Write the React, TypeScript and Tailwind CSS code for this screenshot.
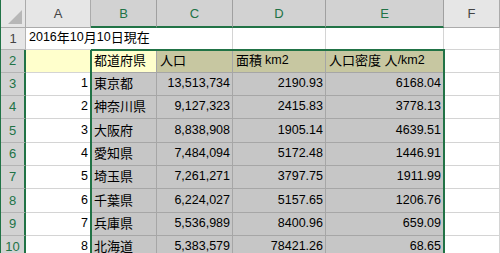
import React from 'react'

const rows = [
  { n: 1, pref: '東京都', pop: '13,513,734', area: '2190.93', dens: '6168.04' },
  { n: 2, pref: '神奈川県', pop: '9,127,323', area: '2415.83', dens: '3778.13' },
  { n: 3, pref: '大阪府', pop: '8,838,908', area: '1905.14', dens: '4639.51' },
  { n: 4, pref: '愛知県', pop: '7,484,094', area: '5172.48', dens: '1446.91' },
  { n: 5, pref: '埼玉県', pop: '7,261,271', area: '3797.75', dens: '1911.99' },
  { n: 6, pref: '千葉県', pop: '6,224,027', area: '5157.65', dens: '1206.76' },
  { n: 7, pref: '兵庫県', pop: '5,536,989', area: '8400.96', dens: '659.09' },
  { n: 8, pref: '北海道', pop: '5,383,579', area: '78421.26', dens: '68.65' },
]

const cols = ['A', 'B', 'C', 'D', 'E', 'F']

// row header cell (numbers on the left)
function RowHead({ n, sel }: { n: number; sel: boolean }) {
  return (
    <div
      className={
        sel
          ? 'flex items-center justify-center border-b border-r-2 border-b-[#b4b4b4] border-r-[#217346] bg-[#d2d2d2] text-[13px] text-[#217346]'
          : 'flex items-center justify-center border-b border-r border-[#b4b4b4] bg-[#e6e6e6] text-[13px] text-[#444]'
      }
    >
      {n}
    </div>
  )
}

function Cell({
  children,
  className = '',
}: {
  children?: React.ReactNode
  className?: string
}) {
  return <div className={`flex items-end pb-[2px] whitespace-nowrap ${className}`}>{children}</div>
}

export default function App() {
  const gray = 'border-b border-r border-[#a6a6a6] bg-[#c6c6c6]'
  const num = 'justify-end pr-[2px] text-[12.5px]'
  return (
    <div
      className="relative h-[253px] w-[500px] overflow-hidden border-l border-[#217346] bg-white text-black"
      style={{ fontFamily: '"Liberation Sans", "Noto Sans CJK JP", sans-serif' }}
    >
      <div className="grid grid-cols-[25px_65px_66px_76px_93px_118px_1fr] grid-rows-[28px_22px_23px_23px_23px_24px_23px_23px_24px_23px_23px]">
        {/* corner */}
        <div className="relative border-b border-r border-[#ababab] bg-[#e6e6e6]">
          <svg className="absolute bottom-[3px] right-[3px]" width="14" height="14" viewBox="0 0 14 14">
            <polygon points="14,0 14,14 0,14" fill="#b7b7b7" />
          </svg>
        </div>
        {cols.map((c) => {
          const sel = c !== 'A' && c !== 'F'
          return (
            <div
              key={c}
              className={
                sel
                  ? 'flex items-center justify-center border-r border-b-2 border-r-[#a0a0a0] border-b-[#217346] bg-[#d2d2d2] pt-[1px] text-[13px] text-[#217346]'
                  : 'flex items-center justify-center border-r border-b border-[#ababab] bg-[#e6e6e6] text-[13px] text-[#444]'
              }
            >
              {c}
            </div>
          )
        })}

        {/* row 1 */}
        <RowHead n={1} sel={false} />
        <Cell className="relative z-10 border-b border-[#d4d4d4] pl-[3px] text-[13px]">
          <span className="text-[12.5px]">2016</span>年<span className="text-[12.5px]">10</span>月
          <span className="text-[12.5px]">10</span>日現在
        </Cell>
        <Cell className="border-b border-[#d4d4d4]" />
        <Cell className="border-b border-r border-[#d4d4d4]" />
        <Cell className="border-b border-r border-[#d4d4d4]" />
        <Cell className="border-b border-r border-[#d4d4d4]" />
        <Cell className="border-b border-r border-[#d4d4d4]" />

        {/* row 2 */}
        <RowHead n={2} sel />
        <Cell className="border-b border-r border-[#d4d4d4] bg-[#ffffcc]" />
        <Cell className="border-b border-r border-[#a6a6a6] bg-[#ffffcc] pl-[3px] text-[13px]">都道府県</Cell>
        <Cell className="border-b border-r border-[#a6a6a6] bg-[#c7c7a1] pl-[3px] text-[13px]">人口</Cell>
        <Cell className="border-b border-r border-[#a6a6a6] bg-[#c7c7a1] pl-[3px] text-[13px]">
          面積 <span className="ml-[3px] text-[12.5px]">km2</span>
        </Cell>
        <Cell className="border-b border-r border-[#a6a6a6] bg-[#c7c7a1] pl-[3px] text-[13px]">
          人口密度 人<span className="text-[12.5px]">/km2</span>
        </Cell>
        <Cell className="border-b border-r border-[#d4d4d4]" />

        {rows.map((r, i) => (
          <React.Fragment key={r.n}>
            <RowHead n={i + 3} sel />
            <Cell className={`border-b border-r border-[#d4d4d4] ${num}`}>{r.n}</Cell>
            <Cell className={`${gray} pl-[3px] text-[13px]`}>{r.pref}</Cell>
            <Cell className={`${gray} ${num}`}>{r.pop}</Cell>
            <Cell className={`${gray} ${num}`}>{r.area}</Cell>
            <Cell className={`${gray} ${num}`}>{r.dens}</Cell>
            <Cell className="border-b border-r border-[#d4d4d4]" />
          </React.Fragment>
        ))}
      </div>

      {/* selection border B2:E10 */}
      <div className="pointer-events-none absolute left-[89px] top-[49px] h-[220px] w-[355px] border-2 border-[#217346]" />
    </div>
  )
}
